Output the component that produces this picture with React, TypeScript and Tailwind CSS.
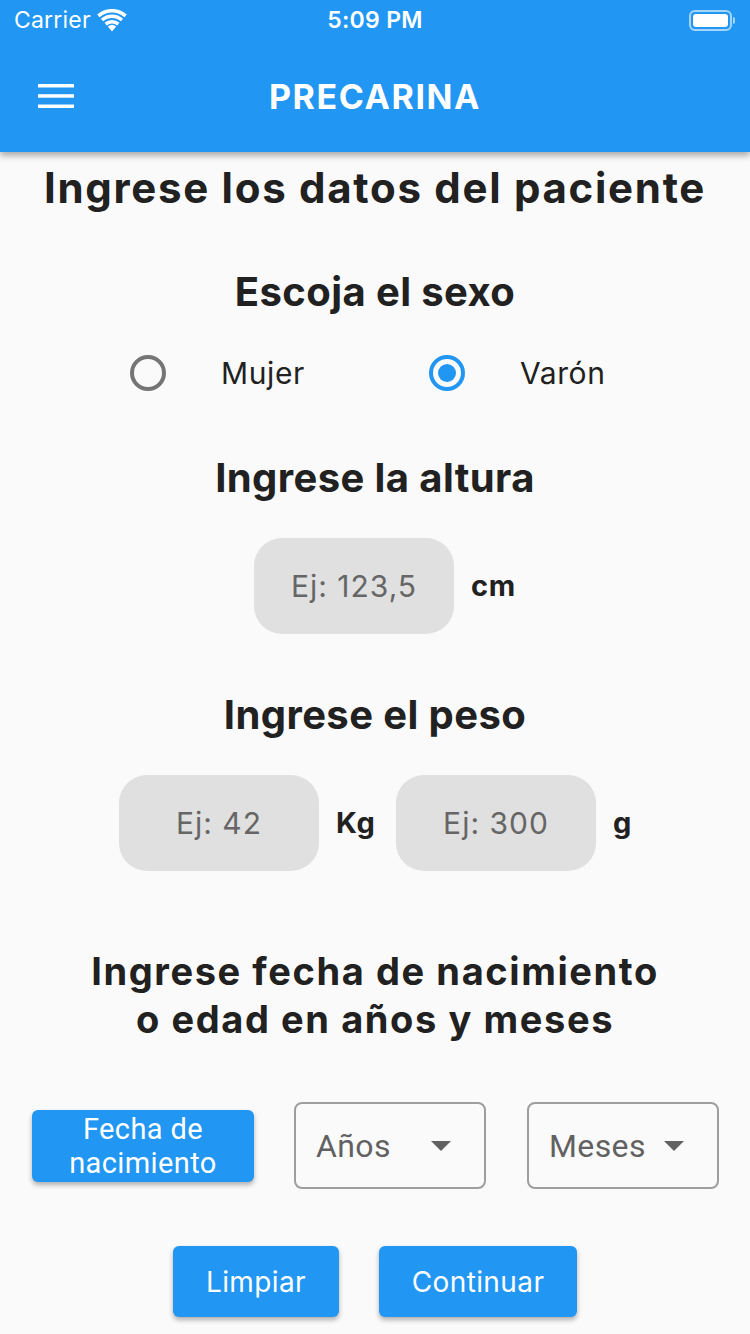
import { useState } from 'react';

const SANS = "font-['Inter','Roboto','Noto_Sans',sans-serif]";
const ROBOTO = "font-['Roboto','Noto_Sans',sans-serif]";

function StatusBar() {
  return (
    <div className="relative flex h-10 items-center px-[14px] text-white">
      <span className={`${SANS} text-[23px] tracking-[0.2px]`}>Carrier</span>
      <svg className="ml-[5px] mt-[1px]" width="32" height="23" viewBox="0 0 26 19" fill="white">
        <path d="M13 18.5l-3.4-4a5.2 5.2 0 0 1 6.8 0z" />
        <path d="M6.8 11.4a9.4 9.4 0 0 1 12.4 0l-1.9 2.2a6.5 6.5 0 0 0-8.6 0z" />
        <path d="M3.8 8a13.8 13.8 0 0 1 18.4 0l-1.9 2.2a10.9 10.9 0 0 0-14.6 0z" />
        <path d="M0.8 4.6a18.4 18.4 0 0 1 24.4 0l-1.9 2.2a15.5 15.5 0 0 0-20.6 0z" />
      </svg>
      <span className={`${SANS} absolute left-1/2 -translate-x-1/2 text-[23px] font-semibold tracking-[0.3px]`}>5:09 PM</span>
      <div className="ml-auto mr-[1px] flex items-center">
        <div className="flex h-[21px] w-[43px] items-center rounded-[6px] border-2 border-white/60 p-[2px]">
          <div className="h-full w-full rounded-[3px] bg-white" />
        </div>
        <div className="ml-[1px] h-[7px] w-[2px] rounded-r bg-white/60" />
      </div>
    </div>
  );
}

function Radio({ checked, label, onClick }: { checked: boolean; label: string; onClick: () => void }) {
  return (
    <button onClick={onClick} className="flex w-[299px] items-center">
      <span
        className={`flex h-[36px] w-[36px] items-center justify-center rounded-full border-[4px] ${
          checked ? 'border-[#2196F3]' : 'border-[#757575]'
        }`}
      >
        {checked && <span className="h-[18px] w-[18px] rounded-full bg-[#2196F3]" />}
      </span>
      <span className={`${SANS} ml-[55px] text-[30px] tracking-[0.6px] text-[#212121]`}>{label}</span>
    </button>
  );
}

function Field({ placeholder }: { placeholder: string }) {
  return (
    <input
      placeholder={placeholder}
      className={`${SANS} h-[96px] w-[200px] rounded-[28px] bg-[#E0E0E0] text-center text-[30px] tracking-[1px] text-[#212121] outline-none placeholder:text-[#666666]`}
    />
  );
}

function Unit({ children, className = '' }: { children: React.ReactNode; className?: string }) {
  return (
    <span className={`${SANS} ml-[17px] text-[29px] font-bold tracking-[0.8px] text-[#212121] ${className}`}>
      {children}
    </span>
  );
}

function Dropdown({ label }: { label: string }) {
  return (
    <div className="flex h-[87px] w-[192px] items-center rounded-[8px] border-2 border-[#9E9E9E] pl-[20px] pr-[33px]">
      <span className={`${ROBOTO} text-[32px] tracking-[0.4px] text-[#616161]`}>{label}</span>
      <svg className="ml-auto" width="20" height="10" viewBox="0 0 20 10">
        <path d="M0 0h20L10 10z" fill="#616161" />
      </svg>
    </div>
  );
}

function Heading({ children, className = '' }: { children: React.ReactNode; className?: string }) {
  return (
    <h2 className={`${SANS} text-center text-[40px] font-bold leading-[42px] tracking-[0.4px] text-[#212121] ${className}`}>
      {children}
    </h2>
  );
}

function BlueButton({ children, className = '' }: { children: React.ReactNode; className?: string }) {
  return (
    <button
      className={`h-[71px] rounded-[6px] bg-[#2196F3] text-white shadow-[0_3px_5px_rgba(0,0,0,0.3)] ${className}`}
    >
      {children}
    </button>
  );
}

export default function App() {
  const [sex, setSex] = useState<'m' | 'v'>('v');

  return (
    <div className="min-h-[1334px] w-[750px] overflow-hidden bg-[#FAFAFA]">
      <header className="relative z-10 bg-[#2196F3] shadow-[0_4px_6px_rgba(0,0,0,0.3)]">
        <StatusBar />
        <div className="relative flex h-[112px] items-center px-[38px]">
          <svg width="36" height="24" viewBox="0 0 36 24" fill="white">
            <rect y="0" width="36" height="3.5" />
            <rect y="10.2" width="36" height="3.5" />
            <rect y="20.5" width="36" height="3.5" />
          </svg>
          <h1
            className={`${SANS} absolute left-1/2 top-1/2 -translate-x-1/2 -translate-y-1/2 text-[34px] font-bold tracking-[1.6px] text-white`}
          >
            PRECARINA
          </h1>
        </div>
      </header>

      <main className="flex flex-col items-center">
        <h2 className={`${SANS} mt-[14px] text-center text-[42px] font-bold leading-[44px] tracking-[1.7px] text-[#212121]`}>
          Ingrese los datos del paciente
        </h2>

        <Heading className="mt-[61px]">Escoja el sexo</Heading>
        <div className="mt-[40px] flex h-[40px] w-full pl-[130px]">
          <Radio checked={sex === 'm'} label="Mujer" onClick={() => setSex('m')} />
          <Radio checked={sex === 'v'} label="Varón" onClick={() => setSex('v')} />
        </div>

        <Heading className="mt-[64px]">Ingrese la altura</Heading>
        <div className="mt-[39px] flex w-full items-center pl-[254px]">
          <Field placeholder="Ej: 123,5" />
          <Unit>cm</Unit>
        </div>

        <Heading className="mt-[60px]">Ingrese el peso</Heading>
        <div className="mt-[39px] flex w-full items-center pl-[119px]">
          <Field placeholder="Ej: 42" />
          <Unit className="w-[60px]">Kg</Unit>
          <Field placeholder="Ej: 300" />
          <Unit>g</Unit>
        </div>

        <h2 className={`${SANS} mt-[76px] text-center text-[38px] font-bold leading-[48px] tracking-[1.6px] text-[#212121]`}>
          Ingrese fecha de nacimiento
          <br />o edad en años y meses
        </h2>

        <div className="mt-[59px] flex w-full items-center pl-[32px]">
          <BlueButton className={`${ROBOTO} h-[72px] w-[222px] text-[29px] leading-[34px] tracking-[0.4px]`}>
            Fecha de
            <br />
            nacimiento
          </BlueButton>
          <div className="ml-[40px]">
            <Dropdown label="Años" />
          </div>
          <div className="ml-[41px]">
            <Dropdown label="Meses" />
          </div>
        </div>

        <div className="mt-[57px] flex items-center gap-[40px]">
          <BlueButton className={`${SANS} w-[166px] text-[28px] tracking-[0.4px]`}>Limpiar</BlueButton>
          <BlueButton className={`${SANS} w-[198px] text-[28px] tracking-[0.4px]`}>Continuar</BlueButton>
        </div>
      </main>
    </div>
  );
}
